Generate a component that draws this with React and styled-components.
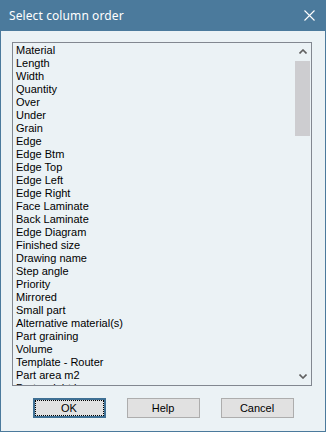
import React from "react";
import styled, { createGlobalStyle } from "styled-components";

const Global = createGlobalStyle`
  html, body { margin: 0; padding: 0; background: #ffffff; }
  #root { width: 326px; height: 432px; }
`;

const Window = styled.div`
  box-sizing: border-box;
  width: 326px;
  height: 432px;
  display: flex;
  flex-direction: column;
  background: #ebf2f5;
  border: 1px solid #4b7a9c;
  border-top: none;
`;

const TitleBar = styled.div`
  height: 31px;
  flex: 0 0 31px;
  margin: 0 -1px;
  background: #4b7a9c;
  display: flex;
  align-items: center;
  justify-content: space-between;
  padding: 0 11px 0 9px;
  color: #ffffff;
  font-family: "Noto Sans", "Open Sans", sans-serif;
  font-size: 12px;
`;

const Title = styled.span`
  letter-spacing: 0.1px;
  margin-top: -1px;
`;

const Body = styled.div`
  flex: 1;
  display: flex;
  flex-direction: column;
  padding: 11px 13px 0 11px;
`;

const ListBox = styled.div`
  box-sizing: border-box;
  width: 300px;
  height: 344px;
  border: 1px solid #828790;
  display: flex;
  overflow: hidden;
`;

const Items = styled.ul`
  flex: 1;
  list-style: none;
  margin: 0;
  padding: 1px 0 0 3px;
  overflow: hidden;
`;

const Item = styled.li`
  height: 13px;
  line-height: 13px;
  font-family: "Liberation Sans", Arial, sans-serif;
  font-size: 11px;
  color: #000000;
  white-space: nowrap;
`;

const ScrollBar = styled.div`
  width: 17px;
  display: flex;
  flex-direction: column;
  align-items: center;
`;

const Arrow = styled.div`
  height: 17px;
  width: 17px;
  display: flex;
  align-items: center;
  justify-content: center;
`;

const Track = styled.div`
  flex: 1;
  width: 100%;
  display: flex;
  flex-direction: column;
  align-items: center;
`;

const Thumb = styled.div`
  width: 15px;
  height: 75px;
  margin-top: 1px;
  background: #cdcdd0;
`;

const Buttons = styled.div`
  display: flex;
  justify-content: center;
  gap: 21px;
  margin-top: 12px;
  margin-right: -2px;
`;

const Button = styled.button`
  box-sizing: border-box;
  width: 73px;
  height: 20px;
  padding: 0;
  background: #e1e1e1;
  border: ${(p) => (p.$default ? "2px solid #3f7094" : "1px solid #adadad")};
  outline: ${(p) => (p.$default ? "1px dotted #000" : "none")};
  outline-offset: -3px;
  font-family: "Liberation Sans", Arial, sans-serif;
  font-size: 11px;
  color: #000;
  line-height: 1;
`;

const items = [
  "Material", "Length", "Width", "Quantity", "Over", "Under", "Grain", "Edge",
  "Edge Btm", "Edge Top", "Edge Left", "Edge Right", "Face Laminate",
  "Back Laminate", "Edge Diagram", "Finished size", "Drawing name",
  "Step angle", "Priority", "Mirrored", "Small part", "Alternative material(s)",
  "Part graining", "Volume", "Template - Router", "Part area m2",
  "Part weight kg", "Edge length",
];

export default function App() {
  return (
    <>
      <Global />
      <Window>
        <TitleBar>
          <Title>Select column order</Title>
          <svg width="11" height="11" viewBox="0 0 11 11">
            <path d="M0.5 0.5 L10.5 10.5 M10.5 0.5 L0.5 10.5" stroke="#ffffff" strokeWidth="1.1" />
          </svg>
        </TitleBar>
        <Body>
          <ListBox>
            <Items>
              {items.map((t) => (
                <Item key={t}>{t}</Item>
              ))}
            </Items>
            <ScrollBar>
              <Arrow>
                <svg width="8" height="5" viewBox="0 0 8 5">
                  <path d="M0.5 4.5 L4 1 L7.5 4.5" stroke="#606060" strokeWidth="1.6" fill="none" />
                </svg>
              </Arrow>
              <Track>
                <Thumb />
              </Track>
              <Arrow>
                <svg width="8" height="5" viewBox="0 0 8 5">
                  <path d="M0.5 0.5 L4 4 L7.5 0.5" stroke="#606060" strokeWidth="1.6" fill="none" />
                </svg>
              </Arrow>
            </ScrollBar>
          </ListBox>
          <Buttons>
            <Button $default>OK</Button>
            <Button>Help</Button>
            <Button>Cancel</Button>
          </Buttons>
        </Body>
      </Window>
    </>
  );
}
